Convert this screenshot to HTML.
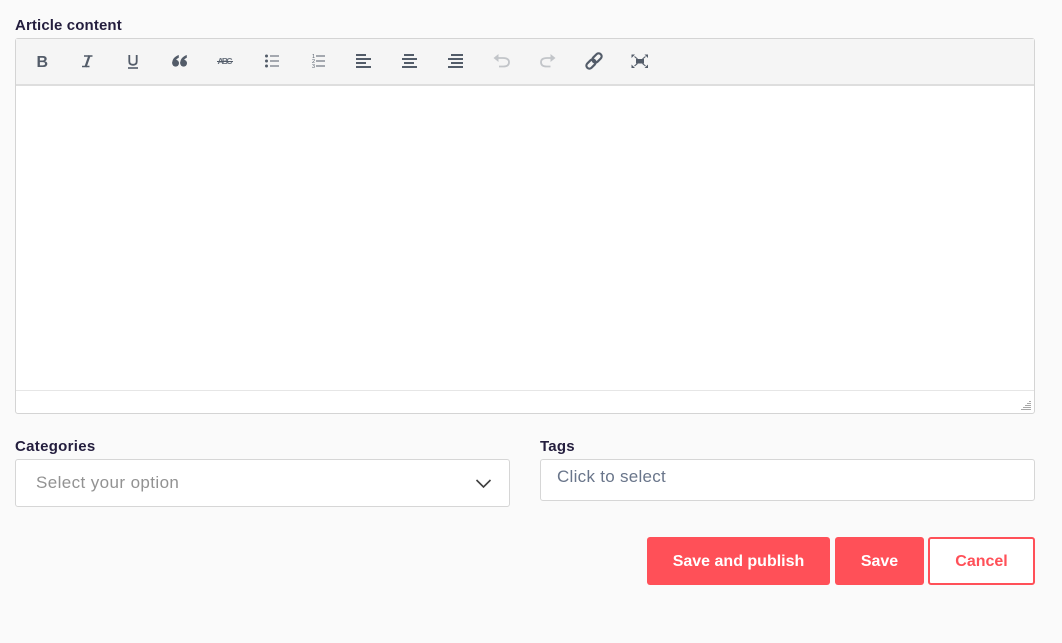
<!DOCTYPE html>
<html lang="en">
<head>
<meta charset="utf-8">
<title>Article form</title>
<style>
html,body{margin:0;padding:0;width:1062px;height:643px;overflow:hidden;background:#fafafa;font-family:"Liberation Sans",sans-serif}
.abs{position:absolute;box-sizing:border-box;white-space:nowrap}
.lbl{font-size:15px;font-weight:700;color:#241e3e;line-height:20px}
.box{background:#fff;border:1px solid #d6d6d6;border-radius:3px}
.btn{display:flex;align-items:center;justify-content:center;font-size:16px;font-weight:700;border-radius:3px;padding-top:1px}
svg{position:absolute;left:0;top:0}
</style>
</head>
<body>
<div class="abs lbl" style="left:15px;top:16px;letter-spacing:.12px">Article content</div>

<div class="abs" style="left:15px;top:38px;width:1020px;height:376px;background:#fff;border:1px solid #d4d4d4;border-radius:3px"></div>
<div class="abs" style="left:16px;top:39px;width:1018px;height:47px;background:#f5f5f5;border-bottom:2px solid #dedede"></div>
<div class="abs" style="left:16px;top:390px;width:1018px;height:1px;background:#e6e6e6"></div>

<svg width="1062" height="643" viewBox="0 0 1062 643" fill="none">
  <!-- bold -->
  <text x="36.500" y="67" font-family="Liberation Sans" font-size="16" font-weight="700" fill="#535c69">B</text>
  <!-- italic -->
  <path d="M84 56h8.500M82 66.500h7.500" stroke="#535c69" stroke-width="1.600"/>
  <path d="M89.500 55.500L85.500 67" stroke="#535c69" stroke-width="2.200"/>
  <!-- underline -->
  <path d="M129.300 55v6.500q0 3.300 3.700 3.300t3.700-3.300v-6.500" stroke="#535c69" stroke-width="1.800"/>
  <path d="M128 68h10" stroke="#535c69" stroke-width="1.600"/>
  <!-- quote -->
  <g fill="#535c69">
    <circle cx="175.600" cy="63.200" r="3.400"/>
    <path d="M178.800 55Q172 57.500 172.200 63.500L175.500 62.500Q175.200 59.300 178.800 57.800z"/>
    <circle cx="183.600" cy="63.200" r="3.400"/>
    <path d="M186.800 55Q180 57.500 180.200 63.500L183.500 62.500Q183.200 59.300 186.800 57.800z"/>
  </g>
  <!-- strikethrough -->
  <text x="217.500" y="64" font-family="Liberation Sans" font-size="8.500" font-weight="700" fill="#6a727e" textLength="15">ABC</text>
  <path d="M217 61.500h16" stroke="#535c69" stroke-width="1"/>
  <!-- unordered list -->
  <circle cx="266.500" cy="56" r="1.500" fill="#535c69"/>
  <circle cx="266.500" cy="61" r="1.500" fill="#535c69"/>
  <circle cx="266.500" cy="66" r="1.500" fill="#535c69"/>
  <path d="M270 56h9M270 61h9M270 66h9" stroke="#535c69" stroke-width="1"/>
  <!-- ordered list -->
  <text x="312" y="58" font-family="Liberation Sans" font-size="5.500" fill="#535c69">1</text>
  <text x="312" y="63" font-family="Liberation Sans" font-size="5.500" fill="#535c69">2</text>
  <text x="312" y="68" font-family="Liberation Sans" font-size="5.500" fill="#535c69">3</text>
  <path d="M316 56h9M316 61h9M316 66h9" stroke="#535c69" stroke-width="1"/>
  <!-- align left -->
  <path d="M356 55h10M356 59h15M356 63h10M356 67h15" stroke="#535c69" stroke-width="2"/>
  <!-- align center -->
  <path d="M404 55h10M402 59h15M404 63h10M402 67h15" stroke="#535c69" stroke-width="2"/>
  <!-- align right -->
  <path d="M451 55h12M448 59h15M451 63h12M448 67h15" stroke="#535c69" stroke-width="2"/>
  <!-- undo -->
  <path d="M496 58h7q6 0 6 4.300t-6 4.200h-4" stroke="#c2c5c9" stroke-width="1.800"/>
  <path d="M498.500 54L493.500 58L498.500 62z" fill="#c2c5c9"/>
  <!-- redo -->
  <path d="M553 58h-6q-6 0-6 4.300t6 4.200h3.500" stroke="#c2c5c9" stroke-width="1.800"/>
  <path d="M550.500 54L555.500 58L550.500 62z" fill="#c2c5c9"/>
  <!-- link -->
  <g stroke="#535c69" stroke-width="2.200" transform="rotate(-45 594 61)">
    <rect x="584.500" y="58" width="10.500" height="6" rx="3"/>
    <rect x="593" y="58" width="10.500" height="6" rx="3"/>
  </g>
  <!-- fullscreen -->
  <rect x="636" y="59" width="8" height="4.500" fill="#535c69"/>
  <path d="M634.500 56.500l3 2.500M645.500 56.500l-3 2.500M634.500 66l3-2.500M645.500 66l-3-2.500" stroke="#535c69" stroke-width="1.100"/>
  <path d="M631.500 54.500h3.500l-3.500 3.500zM648 54.500h-3.500l3.500 3.500zM631.500 68h3.500l-3.500-3.500zM648 68h-3.500l3.500-3.500z" fill="#535c69"/>
  <!-- resize handle -->
  <path d="M1029 401.500h2M1027 403.500h4M1025 405.500h6M1023 407.500h8M1021 409.500h10" stroke="#a8a8a8" stroke-width="1"/>
</svg>

<div class="abs lbl" style="left:15px;top:437px;letter-spacing:.3px">Categories</div>
<div class="abs box" style="left:15px;top:459px;width:495px;height:48px"></div>
<div class="abs" style="left:36px;top:473px;font-size:17px;line-height:20px;color:#929292;letter-spacing:.4px">Select your option</div>
<svg width="1062" height="643" viewBox="0 0 1062 643" fill="none">
  <path d="M476.500 480l7 7 7-7" stroke="#3f3f3f" stroke-width="1.600"/>
</svg>

<div class="abs lbl" style="left:540px;top:437px;letter-spacing:.25px">Tags</div>
<div class="abs box" style="left:540px;top:459px;width:495px;height:42px"></div>
<div class="abs" style="left:557px;top:467px;font-size:17px;line-height:20px;color:#69758a;letter-spacing:.28px">Click to select</div>

<div class="abs btn" style="left:647px;top:537px;width:183px;height:48px;background:#ff5058;color:#fff">Save and publish</div>
<div class="abs btn" style="left:835px;top:537px;width:89px;height:48px;background:#ff5058;color:#fff">Save</div>
<div class="abs btn" style="left:928px;top:537px;width:107px;height:48px;background:#fff;color:#ff5058;border:2px solid #ff5058">Cancel</div>
</body>
</html>
